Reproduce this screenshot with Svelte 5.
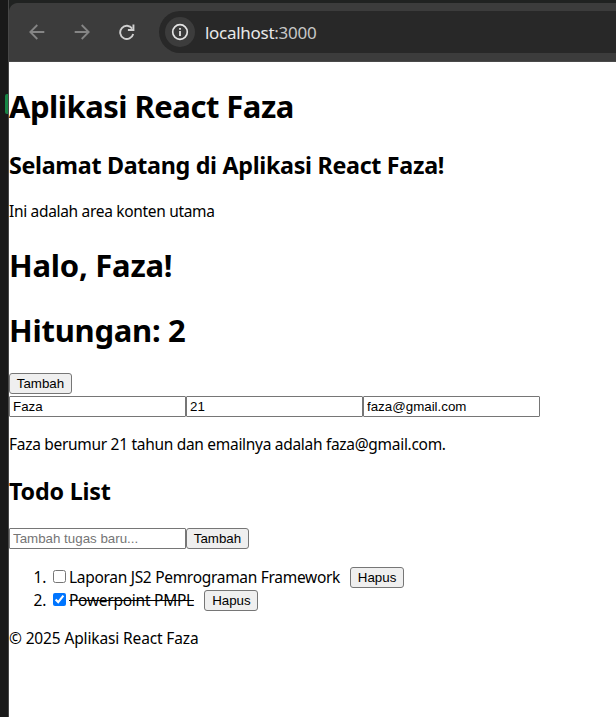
<script>
  let nama = $state('Faza');
  let umur = $state('21');
  let email = $state('faza@gmail.com');
  let hitungan = $state(2);
  let tugas = $state('');
  let todos = $state([
    { id: 1, text: 'Laporan JS2 Pemrograman Framework', done: false, cls: 'laporan' },
    { id: 2, text: 'Powerpoint PMPL', done: true, cls: 'powerpoint' }
  ]);

  function tambahTugas() {
    if (!tugas.trim()) return;
    todos.push({ id: Date.now(), text: tugas, done: false, cls: '' });
    tugas = '';
  }

  function hapus(id) {
    todos = todos.filter((t) => t.id !== id);
  }
</script>

<div class="screen">
  <div class="backdrop"><div class="marker"></div></div>
  <div class="window">
    <div class="tabstrip"></div>
    <nav class="toolbar">
      <svg class="nav back" width="16" height="16" viewBox="0 0 16 16" fill="none" stroke="#858585" stroke-width="1.8">
        <path d="M15.3 8H1.6M8.3 1 1.3 8l7 7" />
      </svg>
      <svg class="nav forward" width="16" height="16" viewBox="0 0 16 16" fill="none" stroke="#858585" stroke-width="1.8">
        <path d="M.7 8h13.7M7.7 1l7 7-7 7" />
      </svg>
      <svg class="nav reload" width="16" height="16" viewBox="0 0 16 16">
        <path d="M13.2 4.6A6.6 6.6 0 1 0 14.2 10" fill="none" stroke="#d0d0d0" stroke-width="1.9" />
        <path d="M15.4.4V6.9H8.9V5.1H13.5V.4Z" fill="#d0d0d0" />
      </svg>
      <div class="address">
        <span class="info">
          <svg width="18" height="18" viewBox="0 0 18 18">
            <circle cx="9" cy="9" r="7.3" fill="none" stroke="#e3e3e3" stroke-width="1.7" />
            <path d="M8.1 8h1.8v5H8.1zM8.1 5h1.8v1.8H8.1z" fill="#e3e3e3" />
          </svg>
        </span>
        <span class="url">localhost<span class="port">:3000</span></span>
      </div>
    </nav>

    <main class="page">
      <h1 class="judul">Aplikasi React Faza</h1>
      <h2 class="sambutan">Selamat Datang di Aplikasi React Faza!</h2>
      <p class="konten">Ini adalah area konten utama</p>
      <h1 class="halo">Halo, Faza!</h1>
      <h1 class="hitung">Hitungan: {hitungan}</h1>
      <div class="counter"><button class="tambah" onclick={() => hitungan++}>Tambah</button></div>
      <div class="fields">
        <input type="text" bind:value={nama} />
        <input type="text" bind:value={umur} />
        <input type="text" bind:value={email} />
      </div>
      <p class="profil">{nama} berumur {umur} tahun dan emailnya adalah {email}.</p>
      <h2 class="todo">Todo List</h2>
      <div class="fields">
        <input type="text" placeholder="Tambah tugas baru..." bind:value={tugas} />
        <button class="tambah" onclick={tambahTugas}>Tambah</button>
      </div>
      <ol>
        {#each todos as t, i (t.id)}
          <li>
            <span class="num">{i + 1}.</span>
            <input type="checkbox" bind:checked={t.done} />
            <span class="label {t.cls}" class:done={t.done}>{t.text}</span>
            <button class="hapus" onclick={() => hapus(t.id)}>Hapus</button>
          </li>
        {/each}
      </ol>
      <footer>© 2025 Aplikasi React Faza</footer>
    </main>
  </div>
</div>

<style>
  :global(body) {
    margin: 0;
    background: #fff;
  }
  .screen {
    display: flex;
    width: 616px;
    height: 717px;
    overflow: hidden;
    font-family: 'Noto Sans', 'Open Sans', sans-serif;
    font-size: 15.5px;
    color: #000;
  }
  .backdrop {
    display: flex;
    justify-content: flex-end;
    box-sizing: border-box;
    width: 9px;
    flex: none;
    padding-top: 94px;
    background: #191919;
    border-right: 1px solid #474747;
  }
  .marker {
    width: 3px;
    height: 20px;
    border-radius: 2px 0 0 2px;
    background: #178746;
  }
  .window {
    flex: 1;
    min-width: 0;
    background: #fff;
  }
  .tabstrip {
    height: 3px;
    background: #202221;
  }
  .toolbar {
    display: flex;
    align-items: center;
    box-sizing: border-box;
    height: 59px;
    border-bottom: 1px solid #4a4a4a;
    background: radial-gradient(circle at 9px 9px, #3c3c3c 8.5px, #202221 9.5px) 0 0 / 9px 9px no-repeat,
      #3c3c3c;
  }
  .nav {
    flex: none;
    margin-bottom: 1px;
  }
  .back {
    margin-left: 20px;
  }
  .forward {
    margin-left: 29px;
  }
  .reload {
    margin-left: 29px;
  }
  .address {
    display: flex;
    align-items: center;
    flex: 1;
    height: 42px;
    margin-left: 24px;
    border-radius: 21px 0 0 21px;
    background: #282828;
  }
  .info {
    display: flex;
    align-items: center;
    justify-content: center;
    width: 30px;
    height: 30px;
    margin-left: 6px;
    border-radius: 50%;
    background: #3c3c3c;
  }
  .url {
    margin-left: 10px;
    padding-top: 1px;
    font-size: 17px;
    line-height: 24px;
    letter-spacing: -0.28px;
    color: #e8e8e8;
  }
  .port {
    color: #c7c7c7;
  }
  .page {
    display: flex;
    flex-direction: column;
  }
  h1,
  h2,
  p {
    margin: 0;
    white-space: nowrap;
  }
  h1 {
    height: 43px;
    font-size: 31px;
    line-height: 43px;
    font-weight: 700;
  }
  h2 {
    height: 32px;
    font-size: 23.3px;
    line-height: 32px;
    font-weight: 700;
  }
  p {
    height: 21px;
    line-height: 21px;
  }
  .judul {
    margin-top: 23px;
    letter-spacing: -0.52px;
  }
  .sambutan {
    margin-top: 21px;
    letter-spacing: -0.32px;
  }
  .konten {
    margin-top: 20px;
    letter-spacing: -0.32px;
  }
  .halo {
    margin-top: 22px;
    letter-spacing: -0.25px;
  }
  .hitung {
    margin-top: 22px;
    letter-spacing: -0.27px;
  }
  .counter {
    display: flex;
    margin-top: 21px;
    height: 23px;
  }
  .fields {
    display: flex;
    height: 21px;
  }
  button,
  input[type='text'] {
    box-sizing: border-box;
    height: 21px;
    margin: 0;
    font-family: 'Liberation Sans', Arial, sans-serif;
    font-size: 13.333px;
    line-height: 15px;
    color: #000;
  }
  button {
    padding: 0;
    border: 1px solid #767676;
    border-radius: 3px;
    background: #efefef;
  }
  .tambah {
    width: 63px;
  }
  .hapus {
    width: 54px;
    margin-left: 10px;
  }
  .powerpoint + .hapus {
    margin-left: 10.5px;
  }
  input[type='text'] {
    width: 177px;
    padding: 1px 3px;
    border: 1px solid #767676;
    border-radius: 1px;
    background: #fff;
    outline: none;
  }
  input::placeholder {
    color: #757575;
  }
  .profil {
    margin-top: 17px;
    letter-spacing: -0.3px;
  }
  .todo {
    margin-top: 20px;
    margin-bottom: 21px;
    letter-spacing: -0.2px;
  }
  ol {
    display: flex;
    flex-direction: column;
    margin: 17px 0 0;
    padding: 0;
    list-style: none;
  }
  li {
    display: flex;
    align-items: center;
    height: 23px;
    white-space: nowrap;
  }
  .num {
    width: 37px;
    padding: 0 0 2px;
    box-sizing: border-box;
    text-align: right;
    letter-spacing: -0.3px;
  }
  input[type='checkbox'] {
    flex: none;
    width: 13px;
    height: 13px;
    margin: 0 3px 3px 7px;
  }
  .label {
    padding-bottom: 2px;
    letter-spacing: -0.3px;
  }
  .powerpoint {
    letter-spacing: -0.26px;
  }
  .done {
    text-decoration: line-through;
  }
  footer {
    margin-top: 16px;
    height: 21px;
    line-height: 21px;
    letter-spacing: -0.14px;
  }
</style>
